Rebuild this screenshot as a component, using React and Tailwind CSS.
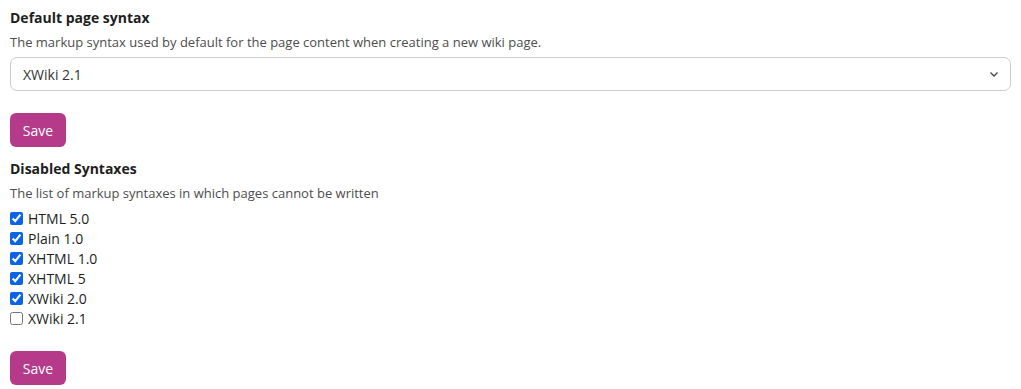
import React from "react";

const syntaxes = [
    {label: "HTML 5.0", checked: true},
    {label: "Plain 1.0", checked: true},
    {label: "XHTML 1.0", checked: true},
    {label: "XHTML 5", checked: true},
    {label: "XWiki 2.0", checked: true},
    {label: "XWiki 2.1", checked: false},
];

const SaveButton = () => (
    <button className="h-[34px] w-[56px] rounded-[6px] bg-[#b53a8a] text-[14px] text-white">
        Save
    </button>
);

const App = () => {
    return (
        <div className="w-[1021px] h-[389px] overflow-hidden bg-white px-[10px] pt-[8px] text-[#1e1e1e]"
             style={{fontFamily: '"Open Sans", sans-serif'}}>
            <h2 className="text-[14px] font-bold leading-[20px]">Default page syntax</h2>
            <p className="mt-[5px] text-[13px] leading-[18px] text-[#4d4d4d]">
                The markup syntax used by default for the page content when creating a new wiki page.
            </p>
            <div className="mt-[6px] flex h-[34px] w-[1001px] items-center justify-between rounded-[7px] border border-[#cccccc] pl-[12px] pr-[11px]">
                <span className="text-[14px] text-[#333]">XWiki 2.1</span>
                <svg width="10" height="10" viewBox="0 0 10 10" fill="none">
                    <path d="M1.5 3.5L5 7L8.5 3.5" stroke="#444" strokeWidth="1.3"/>
                </svg>
            </div>
            <div className="mt-[22px]">
                <SaveButton/>
            </div>
            <h2 className="mt-[12px] text-[14px] font-bold leading-[20px]">Disabled Syntaxes</h2>
            <p className="mt-[5px] text-[13px] leading-[18px] text-[#4d4d4d]">
                The list of markup syntaxes in which pages cannot be written
            </p>
            <ul className="mt-[6px] flex flex-col">
                {syntaxes.map((s) => (
                    <li key={s.label} className="flex h-[20px] items-center gap-[5px] text-[14px]">
                        <input type="checkbox" defaultChecked={s.checked}
                               className="m-0 h-[13px] w-[13px] accent-[#0b63e5]"/>
                        <span>{s.label}</span>
                    </li>
                ))}
            </ul>
            <div className="mt-[23px]">
                <SaveButton/>
            </div>
        </div>
    );
};

export default App;
